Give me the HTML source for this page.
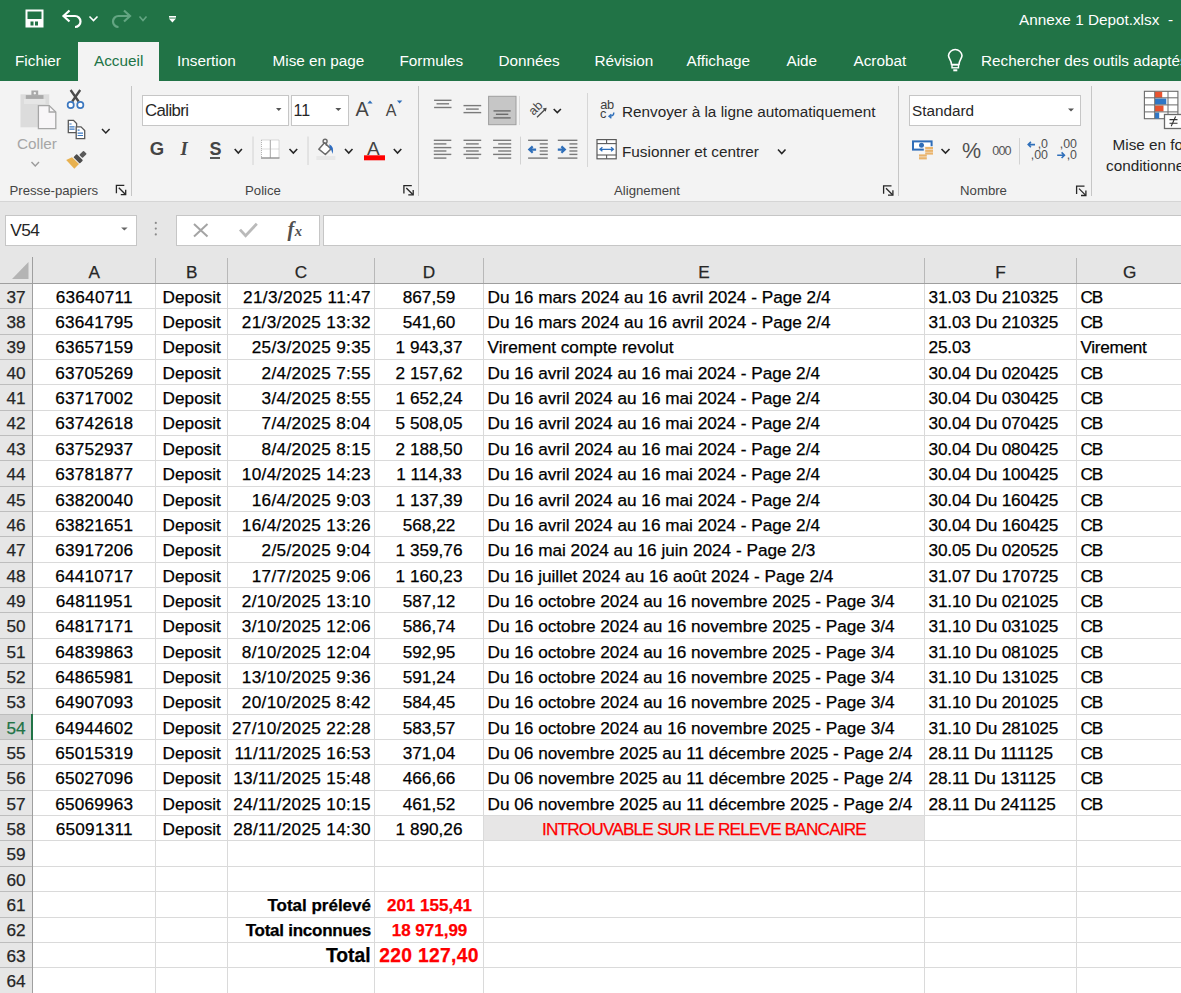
<!DOCTYPE html>
<html><head><meta charset="utf-8"><style>
html,body{margin:0;padding:0;width:1181px;height:993px;overflow:hidden;background:#fff;position:relative}
.t{position:absolute;white-space:pre;font-family:"Liberation Sans",sans-serif}
.r{position:absolute}
svg{position:absolute}
</style></head><body>
<div class="r" style="left:0px;top:0px;width:1181px;height:81px;background:#217346;"></div>
<div class="r" style="left:78px;top:42px;width:81px;height:39px;background:#f3f3f3;"></div>
<div class="t" style="left:1019px;top:11.55px;font-size:15.3px;line-height:15.3px;color:#fff;font-weight:normal;font-family:'Liberation Sans', sans-serif;">Annexe 1 Depot.xlsx</div>
<div class="t" style="left:1168px;top:11.55px;font-size:15.3px;line-height:15.3px;color:#fff;font-weight:normal;font-family:'Liberation Sans', sans-serif;">-</div>
<div class="t" style="left:15px;top:52.55px;font-size:15.3px;line-height:15.3px;color:#fff;font-weight:normal;font-family:'Liberation Sans', sans-serif;">Fichier</div>
<div class="t" style="left:94px;top:52.55px;font-size:15.3px;line-height:15.3px;color:#217346;font-weight:normal;font-family:'Liberation Sans', sans-serif;">Accueil</div>
<div class="t" style="left:177px;top:52.55px;font-size:15.3px;line-height:15.3px;color:#fff;font-weight:normal;font-family:'Liberation Sans', sans-serif;">Insertion</div>
<div class="t" style="left:272.5px;top:52.55px;font-size:15.3px;line-height:15.3px;color:#fff;font-weight:normal;font-family:'Liberation Sans', sans-serif;">Mise en page</div>
<div class="t" style="left:399.5px;top:52.55px;font-size:15.3px;line-height:15.3px;color:#fff;font-weight:normal;font-family:'Liberation Sans', sans-serif;">Formules</div>
<div class="t" style="left:498.5px;top:52.55px;font-size:15.3px;line-height:15.3px;color:#fff;font-weight:normal;font-family:'Liberation Sans', sans-serif;">Données</div>
<div class="t" style="left:594.5px;top:52.55px;font-size:15.3px;line-height:15.3px;color:#fff;font-weight:normal;font-family:'Liberation Sans', sans-serif;">Révision</div>
<div class="t" style="left:686.5px;top:52.55px;font-size:15.3px;line-height:15.3px;color:#fff;font-weight:normal;font-family:'Liberation Sans', sans-serif;">Affichage</div>
<div class="t" style="left:786.5px;top:52.55px;font-size:15.3px;line-height:15.3px;color:#fff;font-weight:normal;font-family:'Liberation Sans', sans-serif;">Aide</div>
<div class="t" style="left:853.5px;top:52.55px;font-size:15.3px;line-height:15.3px;color:#fff;font-weight:normal;font-family:'Liberation Sans', sans-serif;">Acrobat</div>
<div class="t" style="left:981px;top:52.55px;font-size:15.3px;line-height:15.3px;color:#fff;font-weight:normal;font-family:'Liberation Sans', sans-serif;">Rechercher des outils adaptés</div>
<div class="r" style="left:0px;top:81px;width:1181px;height:120px;background:#f3f3f3;"></div>
<div class="r" style="left:0px;top:201px;width:1181px;height:1px;background:#d5d5d5;"></div>
<div class="r" style="left:131px;top:86px;width:1px;height:110px;background:#c6c6c6;"></div>
<div class="r" style="left:418px;top:86px;width:1px;height:110px;background:#c6c6c6;"></div>
<div class="r" style="left:898px;top:86px;width:1px;height:110px;background:#c6c6c6;"></div>
<div class="r" style="left:1091px;top:86px;width:1px;height:110px;background:#c6c6c6;"></div>
<div class="t" style="left:9.5px;top:184.33px;font-size:13.2px;line-height:13.2px;color:#444;font-weight:normal;font-family:'Liberation Sans', sans-serif;">Presse-papiers</div>
<div class="t" style="left:-137px;width:800px;text-align:center;top:184.33px;font-size:13.2px;line-height:13.2px;color:#444;font-weight:normal;font-family:'Liberation Sans', sans-serif;">Police</div>
<div class="t" style="left:247px;width:800px;text-align:center;top:184.33px;font-size:13.2px;line-height:13.2px;color:#444;font-weight:normal;font-family:'Liberation Sans', sans-serif;">Alignement</div>
<div class="t" style="left:583.5px;width:800px;text-align:center;top:184.33px;font-size:13.2px;line-height:13.2px;color:#444;font-weight:normal;font-family:'Liberation Sans', sans-serif;">Nombre</div>
<div class="t" style="left:17px;top:136.05px;font-size:15.3px;line-height:15.3px;color:#a6a6a6;font-weight:normal;font-family:'Liberation Sans', sans-serif;">Coller</div>
<div class="r" style="left:142px;top:95px;width:147px;height:31px;background:#fff;box-sizing:border-box;border:1px solid #c6c6c6"></div>
<div class="r" style="left:291px;top:95px;width:58px;height:31px;background:#fff;box-sizing:border-box;border:1px solid #c6c6c6"></div>
<div class="t" style="left:145px;top:102.58px;font-size:16.8px;line-height:16.8px;color:#262626;font-weight:normal;font-family:'Liberation Sans', sans-serif;letter-spacing:-0.6px">Calibri</div>
<div class="t" style="left:293.5px;top:103.06px;font-size:16px;line-height:16px;color:#262626;font-weight:normal;font-family:'Liberation Sans', sans-serif;">11</div>
<div class="r" style="left:909px;top:95px;width:172px;height:31px;background:#fff;box-sizing:border-box;border:1px solid #c6c6c6"></div>
<div class="t" style="left:912px;top:103.35px;font-size:15.3px;line-height:15.3px;color:#262626;font-weight:normal;font-family:'Liberation Sans', sans-serif;">Standard</div>
<div class="t" style="left:622px;top:104.15px;font-size:15.3px;line-height:15.3px;color:#262626;font-weight:normal;font-family:'Liberation Sans', sans-serif;">Renvoyer à la ligne automatiquement</div>
<div class="t" style="left:622px;top:144.25px;font-size:15.3px;line-height:15.3px;color:#262626;font-weight:normal;font-family:'Liberation Sans', sans-serif;">Fusionner et centrer</div>
<div class="t" style="left:1112.5px;top:137.25px;font-size:15.3px;line-height:15.3px;color:#262626;font-weight:normal;font-family:'Liberation Sans', sans-serif;">Mise en forme</div>
<div class="t" style="left:1106px;top:157.85px;font-size:15.3px;line-height:15.3px;color:#262626;font-weight:normal;font-family:'Liberation Sans', sans-serif;">conditionnelle</div>
<div class="r" style="left:0px;top:202px;width:1181px;height:81px;background:#e6e6e6;"></div>
<div class="r" style="left:5px;top:215px;width:132px;height:31px;background:#fff;box-sizing:border-box;border:1px solid #c6c6c6"></div>
<div class="t" style="left:10.3px;top:221.56px;font-size:17.3px;line-height:17.3px;color:#262626;font-weight:normal;font-family:'Liberation Sans', sans-serif;letter-spacing:-0.6px">V54</div>
<div class="r" style="left:176px;top:215px;width:144px;height:31px;background:#fff;box-sizing:border-box;border:1px solid #c6c6c6"></div>
<div class="r" style="left:323px;top:215px;width:900px;height:31px;background:#fff;box-sizing:border-box;border:1px solid #c6c6c6"></div>
<div class="r" style="left:33px;top:283px;width:1148px;height:710px;background:#fff;"></div>
<div class="r" style="left:33px;top:308px;width:1148px;height:1px;background:#dadada;"></div>
<div class="r" style="left:33px;top:334px;width:1148px;height:1px;background:#dadada;"></div>
<div class="r" style="left:33px;top:359px;width:1148px;height:1px;background:#dadada;"></div>
<div class="r" style="left:33px;top:384px;width:1148px;height:1px;background:#dadada;"></div>
<div class="r" style="left:33px;top:410px;width:1148px;height:1px;background:#dadada;"></div>
<div class="r" style="left:33px;top:435px;width:1148px;height:1px;background:#dadada;"></div>
<div class="r" style="left:33px;top:460px;width:1148px;height:1px;background:#dadada;"></div>
<div class="r" style="left:33px;top:486px;width:1148px;height:1px;background:#dadada;"></div>
<div class="r" style="left:33px;top:511px;width:1148px;height:1px;background:#dadada;"></div>
<div class="r" style="left:33px;top:536px;width:1148px;height:1px;background:#dadada;"></div>
<div class="r" style="left:33px;top:562px;width:1148px;height:1px;background:#dadada;"></div>
<div class="r" style="left:33px;top:587px;width:1148px;height:1px;background:#dadada;"></div>
<div class="r" style="left:33px;top:612px;width:1148px;height:1px;background:#dadada;"></div>
<div class="r" style="left:33px;top:638px;width:1148px;height:1px;background:#dadada;"></div>
<div class="r" style="left:33px;top:663px;width:1148px;height:1px;background:#dadada;"></div>
<div class="r" style="left:33px;top:688px;width:1148px;height:1px;background:#dadada;"></div>
<div class="r" style="left:33px;top:714px;width:1148px;height:1px;background:#dadada;"></div>
<div class="r" style="left:33px;top:739px;width:1148px;height:1px;background:#dadada;"></div>
<div class="r" style="left:33px;top:764px;width:1148px;height:1px;background:#dadada;"></div>
<div class="r" style="left:33px;top:790px;width:1148px;height:1px;background:#dadada;"></div>
<div class="r" style="left:33px;top:815px;width:1148px;height:1px;background:#dadada;"></div>
<div class="r" style="left:33px;top:840px;width:1148px;height:1px;background:#dadada;"></div>
<div class="r" style="left:33px;top:866px;width:1148px;height:1px;background:#dadada;"></div>
<div class="r" style="left:33px;top:891px;width:1148px;height:1px;background:#dadada;"></div>
<div class="r" style="left:33px;top:917px;width:1148px;height:1px;background:#dadada;"></div>
<div class="r" style="left:33px;top:942px;width:1148px;height:1px;background:#dadada;"></div>
<div class="r" style="left:33px;top:967px;width:1148px;height:1px;background:#dadada;"></div>
<div class="r" style="left:33px;top:993px;width:1148px;height:1px;background:#dadada;"></div>
<div class="r" style="left:155px;top:258px;width:1px;height:25px;background:#b8b8b8;"></div>
<div class="r" style="left:155px;top:283px;width:1px;height:710px;background:#dadada;"></div>
<div class="r" style="left:227px;top:258px;width:1px;height:25px;background:#b8b8b8;"></div>
<div class="r" style="left:227px;top:283px;width:1px;height:710px;background:#dadada;"></div>
<div class="r" style="left:374px;top:258px;width:1px;height:25px;background:#b8b8b8;"></div>
<div class="r" style="left:374px;top:283px;width:1px;height:710px;background:#dadada;"></div>
<div class="r" style="left:483px;top:258px;width:1px;height:25px;background:#b8b8b8;"></div>
<div class="r" style="left:483px;top:283px;width:1px;height:710px;background:#dadada;"></div>
<div class="r" style="left:924px;top:258px;width:1px;height:25px;background:#b8b8b8;"></div>
<div class="r" style="left:924px;top:283px;width:1px;height:710px;background:#dadada;"></div>
<div class="r" style="left:1076px;top:258px;width:1px;height:25px;background:#b8b8b8;"></div>
<div class="r" style="left:1076px;top:283px;width:1px;height:710px;background:#dadada;"></div>
<div class="r" style="left:0px;top:283px;width:32px;height:710px;background:#e6e6e6;"></div>
<div class="r" style="left:0px;top:308px;width:32px;height:1px;background:#bdbdbd;"></div>
<div class="r" style="left:0px;top:334px;width:32px;height:1px;background:#bdbdbd;"></div>
<div class="r" style="left:0px;top:359px;width:32px;height:1px;background:#bdbdbd;"></div>
<div class="r" style="left:0px;top:384px;width:32px;height:1px;background:#bdbdbd;"></div>
<div class="r" style="left:0px;top:410px;width:32px;height:1px;background:#bdbdbd;"></div>
<div class="r" style="left:0px;top:435px;width:32px;height:1px;background:#bdbdbd;"></div>
<div class="r" style="left:0px;top:460px;width:32px;height:1px;background:#bdbdbd;"></div>
<div class="r" style="left:0px;top:486px;width:32px;height:1px;background:#bdbdbd;"></div>
<div class="r" style="left:0px;top:511px;width:32px;height:1px;background:#bdbdbd;"></div>
<div class="r" style="left:0px;top:536px;width:32px;height:1px;background:#bdbdbd;"></div>
<div class="r" style="left:0px;top:562px;width:32px;height:1px;background:#bdbdbd;"></div>
<div class="r" style="left:0px;top:587px;width:32px;height:1px;background:#bdbdbd;"></div>
<div class="r" style="left:0px;top:612px;width:32px;height:1px;background:#bdbdbd;"></div>
<div class="r" style="left:0px;top:638px;width:32px;height:1px;background:#bdbdbd;"></div>
<div class="r" style="left:0px;top:663px;width:32px;height:1px;background:#bdbdbd;"></div>
<div class="r" style="left:0px;top:688px;width:32px;height:1px;background:#bdbdbd;"></div>
<div class="r" style="left:0px;top:714px;width:32px;height:1px;background:#bdbdbd;"></div>
<div class="r" style="left:0px;top:739px;width:32px;height:1px;background:#bdbdbd;"></div>
<div class="r" style="left:0px;top:764px;width:32px;height:1px;background:#bdbdbd;"></div>
<div class="r" style="left:0px;top:790px;width:32px;height:1px;background:#bdbdbd;"></div>
<div class="r" style="left:0px;top:815px;width:32px;height:1px;background:#bdbdbd;"></div>
<div class="r" style="left:0px;top:840px;width:32px;height:1px;background:#bdbdbd;"></div>
<div class="r" style="left:0px;top:866px;width:32px;height:1px;background:#bdbdbd;"></div>
<div class="r" style="left:0px;top:891px;width:32px;height:1px;background:#bdbdbd;"></div>
<div class="r" style="left:0px;top:917px;width:32px;height:1px;background:#bdbdbd;"></div>
<div class="r" style="left:0px;top:942px;width:32px;height:1px;background:#bdbdbd;"></div>
<div class="r" style="left:0px;top:967px;width:32px;height:1px;background:#bdbdbd;"></div>
<div class="r" style="left:0px;top:993px;width:32px;height:1px;background:#bdbdbd;"></div>
<div class="r" style="left:32px;top:257px;width:1px;height:736px;background:#9f9f9f;"></div>
<div class="r" style="left:0px;top:283px;width:1181px;height:1px;background:#9f9f9f;"></div>
<div class="t" style="left:-305.75px;width:800px;text-align:center;top:264.14px;font-size:17.2px;line-height:17.2px;color:#262626;font-weight:normal;font-family:'Liberation Sans', sans-serif;-webkit-text-stroke:0.25px currentColor;">A</div>
<div class="t" style="left:-208.25px;width:800px;text-align:center;top:264.14px;font-size:17.2px;line-height:17.2px;color:#262626;font-weight:normal;font-family:'Liberation Sans', sans-serif;-webkit-text-stroke:0.25px currentColor;">B</div>
<div class="t" style="left:-99.0px;width:800px;text-align:center;top:264.14px;font-size:17.2px;line-height:17.2px;color:#262626;font-weight:normal;font-family:'Liberation Sans', sans-serif;-webkit-text-stroke:0.25px currentColor;">C</div>
<div class="t" style="left:29.0px;width:800px;text-align:center;top:264.14px;font-size:17.2px;line-height:17.2px;color:#262626;font-weight:normal;font-family:'Liberation Sans', sans-serif;-webkit-text-stroke:0.25px currentColor;">D</div>
<div class="t" style="left:304.0px;width:800px;text-align:center;top:264.14px;font-size:17.2px;line-height:17.2px;color:#262626;font-weight:normal;font-family:'Liberation Sans', sans-serif;-webkit-text-stroke:0.25px currentColor;">E</div>
<div class="t" style="left:600.5px;width:800px;text-align:center;top:264.14px;font-size:17.2px;line-height:17.2px;color:#262626;font-weight:normal;font-family:'Liberation Sans', sans-serif;-webkit-text-stroke:0.25px currentColor;">F</div>
<div class="t" style="left:729.7px;width:800px;text-align:center;top:264.14px;font-size:17.2px;line-height:17.2px;color:#262626;font-weight:normal;font-family:'Liberation Sans', sans-serif;-webkit-text-stroke:0.25px currentColor;">G</div>
<div class="r" style="left:0px;top:715px;width:32px;height:24px;background:#d2d2d2;"></div>
<div class="r" style="left:31px;top:714px;width:2px;height:26px;background:#217346;"></div>
<div class="r" style="left:484px;top:816px;width:440px;height:24px;background:#e7e6e6;"></div>
<div class="t" style="left:-384px;width:800px;text-align:center;top:288.74px;font-size:17.2px;line-height:17.2px;color:#262626;font-weight:normal;font-family:'Liberation Sans', sans-serif;-webkit-text-stroke:0.25px currentColor;">37</div>
<div class="t" style="left:-305.75px;width:800px;text-align:center;top:288.74px;font-size:17.2px;line-height:17.2px;color:#000;font-weight:normal;font-family:'Liberation Sans', sans-serif;-webkit-text-stroke:0.25px currentColor;letter-spacing:0.2px">63640711</div>
<div class="t" style="left:-208.25px;width:800px;text-align:center;top:288.74px;font-size:17.2px;line-height:17.2px;color:#000;font-weight:normal;font-family:'Liberation Sans', sans-serif;-webkit-text-stroke:0.25px currentColor;">Deposit</div>
<div class="t" style="right:810px;top:288.74px;font-size:17.2px;line-height:17.2px;color:#000;font-weight:normal;font-family:'Liberation Sans', sans-serif;-webkit-text-stroke:0.25px currentColor;letter-spacing:0.33px">21/3/2025 11:47</div>
<div class="t" style="left:29.0px;width:800px;text-align:center;top:288.74px;font-size:17.2px;line-height:17.2px;color:#000;font-weight:normal;font-family:'Liberation Sans', sans-serif;-webkit-text-stroke:0.25px currentColor;">867,59</div>
<div class="t" style="left:487.5px;top:288.74px;font-size:17.2px;line-height:17.2px;color:#000;font-weight:normal;font-family:'Liberation Sans', sans-serif;-webkit-text-stroke:0.25px currentColor;">Du 16 mars 2024 au 16 avril 2024 - Page 2/4</div>
<div class="t" style="left:928.5px;top:288.74px;font-size:17.2px;line-height:17.2px;color:#000;font-weight:normal;font-family:'Liberation Sans', sans-serif;-webkit-text-stroke:0.25px currentColor;letter-spacing:-0.15px">31.03 Du 210325</div>
<div class="t" style="left:1080.5px;top:288.74px;font-size:17.2px;line-height:17.2px;color:#000;font-weight:normal;font-family:'Liberation Sans', sans-serif;-webkit-text-stroke:0.25px currentColor;letter-spacing:-1.2px">CB</div>
<div class="t" style="left:-384px;width:800px;text-align:center;top:314.09px;font-size:17.2px;line-height:17.2px;color:#262626;font-weight:normal;font-family:'Liberation Sans', sans-serif;-webkit-text-stroke:0.25px currentColor;">38</div>
<div class="t" style="left:-305.75px;width:800px;text-align:center;top:314.09px;font-size:17.2px;line-height:17.2px;color:#000;font-weight:normal;font-family:'Liberation Sans', sans-serif;-webkit-text-stroke:0.25px currentColor;letter-spacing:0.2px">63641795</div>
<div class="t" style="left:-208.25px;width:800px;text-align:center;top:314.09px;font-size:17.2px;line-height:17.2px;color:#000;font-weight:normal;font-family:'Liberation Sans', sans-serif;-webkit-text-stroke:0.25px currentColor;">Deposit</div>
<div class="t" style="right:810px;top:314.09px;font-size:17.2px;line-height:17.2px;color:#000;font-weight:normal;font-family:'Liberation Sans', sans-serif;-webkit-text-stroke:0.25px currentColor;letter-spacing:0.33px">21/3/2025 13:32</div>
<div class="t" style="left:29.0px;width:800px;text-align:center;top:314.09px;font-size:17.2px;line-height:17.2px;color:#000;font-weight:normal;font-family:'Liberation Sans', sans-serif;-webkit-text-stroke:0.25px currentColor;">541,60</div>
<div class="t" style="left:487.5px;top:314.09px;font-size:17.2px;line-height:17.2px;color:#000;font-weight:normal;font-family:'Liberation Sans', sans-serif;-webkit-text-stroke:0.25px currentColor;">Du 16 mars 2024 au 16 avril 2024 - Page 2/4</div>
<div class="t" style="left:928.5px;top:314.09px;font-size:17.2px;line-height:17.2px;color:#000;font-weight:normal;font-family:'Liberation Sans', sans-serif;-webkit-text-stroke:0.25px currentColor;letter-spacing:-0.15px">31.03 Du 210325</div>
<div class="t" style="left:1080.5px;top:314.09px;font-size:17.2px;line-height:17.2px;color:#000;font-weight:normal;font-family:'Liberation Sans', sans-serif;-webkit-text-stroke:0.25px currentColor;letter-spacing:-1.2px">CB</div>
<div class="t" style="left:-384px;width:800px;text-align:center;top:339.44px;font-size:17.2px;line-height:17.2px;color:#262626;font-weight:normal;font-family:'Liberation Sans', sans-serif;-webkit-text-stroke:0.25px currentColor;">39</div>
<div class="t" style="left:-305.75px;width:800px;text-align:center;top:339.44px;font-size:17.2px;line-height:17.2px;color:#000;font-weight:normal;font-family:'Liberation Sans', sans-serif;-webkit-text-stroke:0.25px currentColor;letter-spacing:0.2px">63657159</div>
<div class="t" style="left:-208.25px;width:800px;text-align:center;top:339.44px;font-size:17.2px;line-height:17.2px;color:#000;font-weight:normal;font-family:'Liberation Sans', sans-serif;-webkit-text-stroke:0.25px currentColor;">Deposit</div>
<div class="t" style="right:810px;top:339.44px;font-size:17.2px;line-height:17.2px;color:#000;font-weight:normal;font-family:'Liberation Sans', sans-serif;-webkit-text-stroke:0.25px currentColor;letter-spacing:0.33px">25/3/2025 9:35</div>
<div class="t" style="left:29.0px;width:800px;text-align:center;top:339.44px;font-size:17.2px;line-height:17.2px;color:#000;font-weight:normal;font-family:'Liberation Sans', sans-serif;-webkit-text-stroke:0.25px currentColor;">1 943,37</div>
<div class="t" style="left:487.5px;top:339.44px;font-size:17.2px;line-height:17.2px;color:#000;font-weight:normal;font-family:'Liberation Sans', sans-serif;-webkit-text-stroke:0.25px currentColor;">Virement compte revolut</div>
<div class="t" style="left:928.5px;top:339.44px;font-size:17.2px;line-height:17.2px;color:#000;font-weight:normal;font-family:'Liberation Sans', sans-serif;-webkit-text-stroke:0.25px currentColor;letter-spacing:-0.15px">25.03</div>
<div class="t" style="left:1080.5px;top:339.44px;font-size:17.2px;line-height:17.2px;color:#000;font-weight:normal;font-family:'Liberation Sans', sans-serif;-webkit-text-stroke:0.25px currentColor;letter-spacing:-0.3px">Virement</div>
<div class="t" style="left:-384px;width:800px;text-align:center;top:364.79px;font-size:17.2px;line-height:17.2px;color:#262626;font-weight:normal;font-family:'Liberation Sans', sans-serif;-webkit-text-stroke:0.25px currentColor;">40</div>
<div class="t" style="left:-305.75px;width:800px;text-align:center;top:364.79px;font-size:17.2px;line-height:17.2px;color:#000;font-weight:normal;font-family:'Liberation Sans', sans-serif;-webkit-text-stroke:0.25px currentColor;letter-spacing:0.2px">63705269</div>
<div class="t" style="left:-208.25px;width:800px;text-align:center;top:364.79px;font-size:17.2px;line-height:17.2px;color:#000;font-weight:normal;font-family:'Liberation Sans', sans-serif;-webkit-text-stroke:0.25px currentColor;">Deposit</div>
<div class="t" style="right:810px;top:364.79px;font-size:17.2px;line-height:17.2px;color:#000;font-weight:normal;font-family:'Liberation Sans', sans-serif;-webkit-text-stroke:0.25px currentColor;letter-spacing:0.33px">2/4/2025 7:55</div>
<div class="t" style="left:29.0px;width:800px;text-align:center;top:364.79px;font-size:17.2px;line-height:17.2px;color:#000;font-weight:normal;font-family:'Liberation Sans', sans-serif;-webkit-text-stroke:0.25px currentColor;">2 157,62</div>
<div class="t" style="left:487.5px;top:364.79px;font-size:17.2px;line-height:17.2px;color:#000;font-weight:normal;font-family:'Liberation Sans', sans-serif;-webkit-text-stroke:0.25px currentColor;">Du 16 avril 2024 au 16 mai 2024 - Page 2/4</div>
<div class="t" style="left:928.5px;top:364.79px;font-size:17.2px;line-height:17.2px;color:#000;font-weight:normal;font-family:'Liberation Sans', sans-serif;-webkit-text-stroke:0.25px currentColor;letter-spacing:-0.15px">30.04 Du 020425</div>
<div class="t" style="left:1080.5px;top:364.79px;font-size:17.2px;line-height:17.2px;color:#000;font-weight:normal;font-family:'Liberation Sans', sans-serif;-webkit-text-stroke:0.25px currentColor;letter-spacing:-1.2px">CB</div>
<div class="t" style="left:-384px;width:800px;text-align:center;top:390.14px;font-size:17.2px;line-height:17.2px;color:#262626;font-weight:normal;font-family:'Liberation Sans', sans-serif;-webkit-text-stroke:0.25px currentColor;">41</div>
<div class="t" style="left:-305.75px;width:800px;text-align:center;top:390.14px;font-size:17.2px;line-height:17.2px;color:#000;font-weight:normal;font-family:'Liberation Sans', sans-serif;-webkit-text-stroke:0.25px currentColor;letter-spacing:0.2px">63717002</div>
<div class="t" style="left:-208.25px;width:800px;text-align:center;top:390.14px;font-size:17.2px;line-height:17.2px;color:#000;font-weight:normal;font-family:'Liberation Sans', sans-serif;-webkit-text-stroke:0.25px currentColor;">Deposit</div>
<div class="t" style="right:810px;top:390.14px;font-size:17.2px;line-height:17.2px;color:#000;font-weight:normal;font-family:'Liberation Sans', sans-serif;-webkit-text-stroke:0.25px currentColor;letter-spacing:0.33px">3/4/2025 8:55</div>
<div class="t" style="left:29.0px;width:800px;text-align:center;top:390.14px;font-size:17.2px;line-height:17.2px;color:#000;font-weight:normal;font-family:'Liberation Sans', sans-serif;-webkit-text-stroke:0.25px currentColor;">1 652,24</div>
<div class="t" style="left:487.5px;top:390.14px;font-size:17.2px;line-height:17.2px;color:#000;font-weight:normal;font-family:'Liberation Sans', sans-serif;-webkit-text-stroke:0.25px currentColor;">Du 16 avril 2024 au 16 mai 2024 - Page 2/4</div>
<div class="t" style="left:928.5px;top:390.14px;font-size:17.2px;line-height:17.2px;color:#000;font-weight:normal;font-family:'Liberation Sans', sans-serif;-webkit-text-stroke:0.25px currentColor;letter-spacing:-0.15px">30.04 Du 030425</div>
<div class="t" style="left:1080.5px;top:390.14px;font-size:17.2px;line-height:17.2px;color:#000;font-weight:normal;font-family:'Liberation Sans', sans-serif;-webkit-text-stroke:0.25px currentColor;letter-spacing:-1.2px">CB</div>
<div class="t" style="left:-384px;width:800px;text-align:center;top:415.49px;font-size:17.2px;line-height:17.2px;color:#262626;font-weight:normal;font-family:'Liberation Sans', sans-serif;-webkit-text-stroke:0.25px currentColor;">42</div>
<div class="t" style="left:-305.75px;width:800px;text-align:center;top:415.49px;font-size:17.2px;line-height:17.2px;color:#000;font-weight:normal;font-family:'Liberation Sans', sans-serif;-webkit-text-stroke:0.25px currentColor;letter-spacing:0.2px">63742618</div>
<div class="t" style="left:-208.25px;width:800px;text-align:center;top:415.49px;font-size:17.2px;line-height:17.2px;color:#000;font-weight:normal;font-family:'Liberation Sans', sans-serif;-webkit-text-stroke:0.25px currentColor;">Deposit</div>
<div class="t" style="right:810px;top:415.49px;font-size:17.2px;line-height:17.2px;color:#000;font-weight:normal;font-family:'Liberation Sans', sans-serif;-webkit-text-stroke:0.25px currentColor;letter-spacing:0.33px">7/4/2025 8:04</div>
<div class="t" style="left:29.0px;width:800px;text-align:center;top:415.49px;font-size:17.2px;line-height:17.2px;color:#000;font-weight:normal;font-family:'Liberation Sans', sans-serif;-webkit-text-stroke:0.25px currentColor;">5 508,05</div>
<div class="t" style="left:487.5px;top:415.49px;font-size:17.2px;line-height:17.2px;color:#000;font-weight:normal;font-family:'Liberation Sans', sans-serif;-webkit-text-stroke:0.25px currentColor;">Du 16 avril 2024 au 16 mai 2024 - Page 2/4</div>
<div class="t" style="left:928.5px;top:415.49px;font-size:17.2px;line-height:17.2px;color:#000;font-weight:normal;font-family:'Liberation Sans', sans-serif;-webkit-text-stroke:0.25px currentColor;letter-spacing:-0.15px">30.04 Du 070425</div>
<div class="t" style="left:1080.5px;top:415.49px;font-size:17.2px;line-height:17.2px;color:#000;font-weight:normal;font-family:'Liberation Sans', sans-serif;-webkit-text-stroke:0.25px currentColor;letter-spacing:-1.2px">CB</div>
<div class="t" style="left:-384px;width:800px;text-align:center;top:440.84px;font-size:17.2px;line-height:17.2px;color:#262626;font-weight:normal;font-family:'Liberation Sans', sans-serif;-webkit-text-stroke:0.25px currentColor;">43</div>
<div class="t" style="left:-305.75px;width:800px;text-align:center;top:440.84px;font-size:17.2px;line-height:17.2px;color:#000;font-weight:normal;font-family:'Liberation Sans', sans-serif;-webkit-text-stroke:0.25px currentColor;letter-spacing:0.2px">63752937</div>
<div class="t" style="left:-208.25px;width:800px;text-align:center;top:440.84px;font-size:17.2px;line-height:17.2px;color:#000;font-weight:normal;font-family:'Liberation Sans', sans-serif;-webkit-text-stroke:0.25px currentColor;">Deposit</div>
<div class="t" style="right:810px;top:440.84px;font-size:17.2px;line-height:17.2px;color:#000;font-weight:normal;font-family:'Liberation Sans', sans-serif;-webkit-text-stroke:0.25px currentColor;letter-spacing:0.33px">8/4/2025 8:15</div>
<div class="t" style="left:29.0px;width:800px;text-align:center;top:440.84px;font-size:17.2px;line-height:17.2px;color:#000;font-weight:normal;font-family:'Liberation Sans', sans-serif;-webkit-text-stroke:0.25px currentColor;">2 188,50</div>
<div class="t" style="left:487.5px;top:440.84px;font-size:17.2px;line-height:17.2px;color:#000;font-weight:normal;font-family:'Liberation Sans', sans-serif;-webkit-text-stroke:0.25px currentColor;">Du 16 avril 2024 au 16 mai 2024 - Page 2/4</div>
<div class="t" style="left:928.5px;top:440.84px;font-size:17.2px;line-height:17.2px;color:#000;font-weight:normal;font-family:'Liberation Sans', sans-serif;-webkit-text-stroke:0.25px currentColor;letter-spacing:-0.15px">30.04 Du 080425</div>
<div class="t" style="left:1080.5px;top:440.84px;font-size:17.2px;line-height:17.2px;color:#000;font-weight:normal;font-family:'Liberation Sans', sans-serif;-webkit-text-stroke:0.25px currentColor;letter-spacing:-1.2px">CB</div>
<div class="t" style="left:-384px;width:800px;text-align:center;top:466.19px;font-size:17.2px;line-height:17.2px;color:#262626;font-weight:normal;font-family:'Liberation Sans', sans-serif;-webkit-text-stroke:0.25px currentColor;">44</div>
<div class="t" style="left:-305.75px;width:800px;text-align:center;top:466.19px;font-size:17.2px;line-height:17.2px;color:#000;font-weight:normal;font-family:'Liberation Sans', sans-serif;-webkit-text-stroke:0.25px currentColor;letter-spacing:0.2px">63781877</div>
<div class="t" style="left:-208.25px;width:800px;text-align:center;top:466.19px;font-size:17.2px;line-height:17.2px;color:#000;font-weight:normal;font-family:'Liberation Sans', sans-serif;-webkit-text-stroke:0.25px currentColor;">Deposit</div>
<div class="t" style="right:810px;top:466.19px;font-size:17.2px;line-height:17.2px;color:#000;font-weight:normal;font-family:'Liberation Sans', sans-serif;-webkit-text-stroke:0.25px currentColor;letter-spacing:0.33px">10/4/2025 14:23</div>
<div class="t" style="left:29.0px;width:800px;text-align:center;top:466.19px;font-size:17.2px;line-height:17.2px;color:#000;font-weight:normal;font-family:'Liberation Sans', sans-serif;-webkit-text-stroke:0.25px currentColor;">1 114,33</div>
<div class="t" style="left:487.5px;top:466.19px;font-size:17.2px;line-height:17.2px;color:#000;font-weight:normal;font-family:'Liberation Sans', sans-serif;-webkit-text-stroke:0.25px currentColor;">Du 16 avril 2024 au 16 mai 2024 - Page 2/4</div>
<div class="t" style="left:928.5px;top:466.19px;font-size:17.2px;line-height:17.2px;color:#000;font-weight:normal;font-family:'Liberation Sans', sans-serif;-webkit-text-stroke:0.25px currentColor;letter-spacing:-0.15px">30.04 Du 100425</div>
<div class="t" style="left:1080.5px;top:466.19px;font-size:17.2px;line-height:17.2px;color:#000;font-weight:normal;font-family:'Liberation Sans', sans-serif;-webkit-text-stroke:0.25px currentColor;letter-spacing:-1.2px">CB</div>
<div class="t" style="left:-384px;width:800px;text-align:center;top:491.54px;font-size:17.2px;line-height:17.2px;color:#262626;font-weight:normal;font-family:'Liberation Sans', sans-serif;-webkit-text-stroke:0.25px currentColor;">45</div>
<div class="t" style="left:-305.75px;width:800px;text-align:center;top:491.54px;font-size:17.2px;line-height:17.2px;color:#000;font-weight:normal;font-family:'Liberation Sans', sans-serif;-webkit-text-stroke:0.25px currentColor;letter-spacing:0.2px">63820040</div>
<div class="t" style="left:-208.25px;width:800px;text-align:center;top:491.54px;font-size:17.2px;line-height:17.2px;color:#000;font-weight:normal;font-family:'Liberation Sans', sans-serif;-webkit-text-stroke:0.25px currentColor;">Deposit</div>
<div class="t" style="right:810px;top:491.54px;font-size:17.2px;line-height:17.2px;color:#000;font-weight:normal;font-family:'Liberation Sans', sans-serif;-webkit-text-stroke:0.25px currentColor;letter-spacing:0.33px">16/4/2025 9:03</div>
<div class="t" style="left:29.0px;width:800px;text-align:center;top:491.54px;font-size:17.2px;line-height:17.2px;color:#000;font-weight:normal;font-family:'Liberation Sans', sans-serif;-webkit-text-stroke:0.25px currentColor;">1 137,39</div>
<div class="t" style="left:487.5px;top:491.54px;font-size:17.2px;line-height:17.2px;color:#000;font-weight:normal;font-family:'Liberation Sans', sans-serif;-webkit-text-stroke:0.25px currentColor;">Du 16 avril 2024 au 16 mai 2024 - Page 2/4</div>
<div class="t" style="left:928.5px;top:491.54px;font-size:17.2px;line-height:17.2px;color:#000;font-weight:normal;font-family:'Liberation Sans', sans-serif;-webkit-text-stroke:0.25px currentColor;letter-spacing:-0.15px">30.04 Du 160425</div>
<div class="t" style="left:1080.5px;top:491.54px;font-size:17.2px;line-height:17.2px;color:#000;font-weight:normal;font-family:'Liberation Sans', sans-serif;-webkit-text-stroke:0.25px currentColor;letter-spacing:-1.2px">CB</div>
<div class="t" style="left:-384px;width:800px;text-align:center;top:516.89px;font-size:17.2px;line-height:17.2px;color:#262626;font-weight:normal;font-family:'Liberation Sans', sans-serif;-webkit-text-stroke:0.25px currentColor;">46</div>
<div class="t" style="left:-305.75px;width:800px;text-align:center;top:516.89px;font-size:17.2px;line-height:17.2px;color:#000;font-weight:normal;font-family:'Liberation Sans', sans-serif;-webkit-text-stroke:0.25px currentColor;letter-spacing:0.2px">63821651</div>
<div class="t" style="left:-208.25px;width:800px;text-align:center;top:516.89px;font-size:17.2px;line-height:17.2px;color:#000;font-weight:normal;font-family:'Liberation Sans', sans-serif;-webkit-text-stroke:0.25px currentColor;">Deposit</div>
<div class="t" style="right:810px;top:516.89px;font-size:17.2px;line-height:17.2px;color:#000;font-weight:normal;font-family:'Liberation Sans', sans-serif;-webkit-text-stroke:0.25px currentColor;letter-spacing:0.33px">16/4/2025 13:26</div>
<div class="t" style="left:29.0px;width:800px;text-align:center;top:516.89px;font-size:17.2px;line-height:17.2px;color:#000;font-weight:normal;font-family:'Liberation Sans', sans-serif;-webkit-text-stroke:0.25px currentColor;">568,22</div>
<div class="t" style="left:487.5px;top:516.89px;font-size:17.2px;line-height:17.2px;color:#000;font-weight:normal;font-family:'Liberation Sans', sans-serif;-webkit-text-stroke:0.25px currentColor;">Du 16 avril 2024 au 16 mai 2024 - Page 2/4</div>
<div class="t" style="left:928.5px;top:516.89px;font-size:17.2px;line-height:17.2px;color:#000;font-weight:normal;font-family:'Liberation Sans', sans-serif;-webkit-text-stroke:0.25px currentColor;letter-spacing:-0.15px">30.04 Du 160425</div>
<div class="t" style="left:1080.5px;top:516.89px;font-size:17.2px;line-height:17.2px;color:#000;font-weight:normal;font-family:'Liberation Sans', sans-serif;-webkit-text-stroke:0.25px currentColor;letter-spacing:-1.2px">CB</div>
<div class="t" style="left:-384px;width:800px;text-align:center;top:542.24px;font-size:17.2px;line-height:17.2px;color:#262626;font-weight:normal;font-family:'Liberation Sans', sans-serif;-webkit-text-stroke:0.25px currentColor;">47</div>
<div class="t" style="left:-305.75px;width:800px;text-align:center;top:542.24px;font-size:17.2px;line-height:17.2px;color:#000;font-weight:normal;font-family:'Liberation Sans', sans-serif;-webkit-text-stroke:0.25px currentColor;letter-spacing:0.2px">63917206</div>
<div class="t" style="left:-208.25px;width:800px;text-align:center;top:542.24px;font-size:17.2px;line-height:17.2px;color:#000;font-weight:normal;font-family:'Liberation Sans', sans-serif;-webkit-text-stroke:0.25px currentColor;">Deposit</div>
<div class="t" style="right:810px;top:542.24px;font-size:17.2px;line-height:17.2px;color:#000;font-weight:normal;font-family:'Liberation Sans', sans-serif;-webkit-text-stroke:0.25px currentColor;letter-spacing:0.33px">2/5/2025 9:04</div>
<div class="t" style="left:29.0px;width:800px;text-align:center;top:542.24px;font-size:17.2px;line-height:17.2px;color:#000;font-weight:normal;font-family:'Liberation Sans', sans-serif;-webkit-text-stroke:0.25px currentColor;">1 359,76</div>
<div class="t" style="left:487.5px;top:542.24px;font-size:17.2px;line-height:17.2px;color:#000;font-weight:normal;font-family:'Liberation Sans', sans-serif;-webkit-text-stroke:0.25px currentColor;">Du 16 mai 2024 au 16 juin 2024 - Page 2/3</div>
<div class="t" style="left:928.5px;top:542.24px;font-size:17.2px;line-height:17.2px;color:#000;font-weight:normal;font-family:'Liberation Sans', sans-serif;-webkit-text-stroke:0.25px currentColor;letter-spacing:-0.15px">30.05 Du 020525</div>
<div class="t" style="left:1080.5px;top:542.24px;font-size:17.2px;line-height:17.2px;color:#000;font-weight:normal;font-family:'Liberation Sans', sans-serif;-webkit-text-stroke:0.25px currentColor;letter-spacing:-1.2px">CB</div>
<div class="t" style="left:-384px;width:800px;text-align:center;top:567.59px;font-size:17.2px;line-height:17.2px;color:#262626;font-weight:normal;font-family:'Liberation Sans', sans-serif;-webkit-text-stroke:0.25px currentColor;">48</div>
<div class="t" style="left:-305.75px;width:800px;text-align:center;top:567.59px;font-size:17.2px;line-height:17.2px;color:#000;font-weight:normal;font-family:'Liberation Sans', sans-serif;-webkit-text-stroke:0.25px currentColor;letter-spacing:0.2px">64410717</div>
<div class="t" style="left:-208.25px;width:800px;text-align:center;top:567.59px;font-size:17.2px;line-height:17.2px;color:#000;font-weight:normal;font-family:'Liberation Sans', sans-serif;-webkit-text-stroke:0.25px currentColor;">Deposit</div>
<div class="t" style="right:810px;top:567.59px;font-size:17.2px;line-height:17.2px;color:#000;font-weight:normal;font-family:'Liberation Sans', sans-serif;-webkit-text-stroke:0.25px currentColor;letter-spacing:0.33px">17/7/2025 9:06</div>
<div class="t" style="left:29.0px;width:800px;text-align:center;top:567.59px;font-size:17.2px;line-height:17.2px;color:#000;font-weight:normal;font-family:'Liberation Sans', sans-serif;-webkit-text-stroke:0.25px currentColor;">1 160,23</div>
<div class="t" style="left:487.5px;top:567.59px;font-size:17.2px;line-height:17.2px;color:#000;font-weight:normal;font-family:'Liberation Sans', sans-serif;-webkit-text-stroke:0.25px currentColor;">Du 16 juillet 2024 au 16 août 2024 - Page 2/4</div>
<div class="t" style="left:928.5px;top:567.59px;font-size:17.2px;line-height:17.2px;color:#000;font-weight:normal;font-family:'Liberation Sans', sans-serif;-webkit-text-stroke:0.25px currentColor;letter-spacing:-0.15px">31.07 Du 170725</div>
<div class="t" style="left:1080.5px;top:567.59px;font-size:17.2px;line-height:17.2px;color:#000;font-weight:normal;font-family:'Liberation Sans', sans-serif;-webkit-text-stroke:0.25px currentColor;letter-spacing:-1.2px">CB</div>
<div class="t" style="left:-384px;width:800px;text-align:center;top:592.94px;font-size:17.2px;line-height:17.2px;color:#262626;font-weight:normal;font-family:'Liberation Sans', sans-serif;-webkit-text-stroke:0.25px currentColor;">49</div>
<div class="t" style="left:-305.75px;width:800px;text-align:center;top:592.94px;font-size:17.2px;line-height:17.2px;color:#000;font-weight:normal;font-family:'Liberation Sans', sans-serif;-webkit-text-stroke:0.25px currentColor;letter-spacing:0.2px">64811951</div>
<div class="t" style="left:-208.25px;width:800px;text-align:center;top:592.94px;font-size:17.2px;line-height:17.2px;color:#000;font-weight:normal;font-family:'Liberation Sans', sans-serif;-webkit-text-stroke:0.25px currentColor;">Deposit</div>
<div class="t" style="right:810px;top:592.94px;font-size:17.2px;line-height:17.2px;color:#000;font-weight:normal;font-family:'Liberation Sans', sans-serif;-webkit-text-stroke:0.25px currentColor;letter-spacing:0.33px">2/10/2025 13:10</div>
<div class="t" style="left:29.0px;width:800px;text-align:center;top:592.94px;font-size:17.2px;line-height:17.2px;color:#000;font-weight:normal;font-family:'Liberation Sans', sans-serif;-webkit-text-stroke:0.25px currentColor;">587,12</div>
<div class="t" style="left:487.5px;top:592.94px;font-size:17.2px;line-height:17.2px;color:#000;font-weight:normal;font-family:'Liberation Sans', sans-serif;-webkit-text-stroke:0.25px currentColor;">Du 16 octobre 2024 au 16 novembre 2025 - Page 3/4</div>
<div class="t" style="left:928.5px;top:592.94px;font-size:17.2px;line-height:17.2px;color:#000;font-weight:normal;font-family:'Liberation Sans', sans-serif;-webkit-text-stroke:0.25px currentColor;letter-spacing:-0.15px">31.10 Du 021025</div>
<div class="t" style="left:1080.5px;top:592.94px;font-size:17.2px;line-height:17.2px;color:#000;font-weight:normal;font-family:'Liberation Sans', sans-serif;-webkit-text-stroke:0.25px currentColor;letter-spacing:-1.2px">CB</div>
<div class="t" style="left:-384px;width:800px;text-align:center;top:618.29px;font-size:17.2px;line-height:17.2px;color:#262626;font-weight:normal;font-family:'Liberation Sans', sans-serif;-webkit-text-stroke:0.25px currentColor;">50</div>
<div class="t" style="left:-305.75px;width:800px;text-align:center;top:618.29px;font-size:17.2px;line-height:17.2px;color:#000;font-weight:normal;font-family:'Liberation Sans', sans-serif;-webkit-text-stroke:0.25px currentColor;letter-spacing:0.2px">64817171</div>
<div class="t" style="left:-208.25px;width:800px;text-align:center;top:618.29px;font-size:17.2px;line-height:17.2px;color:#000;font-weight:normal;font-family:'Liberation Sans', sans-serif;-webkit-text-stroke:0.25px currentColor;">Deposit</div>
<div class="t" style="right:810px;top:618.29px;font-size:17.2px;line-height:17.2px;color:#000;font-weight:normal;font-family:'Liberation Sans', sans-serif;-webkit-text-stroke:0.25px currentColor;letter-spacing:0.33px">3/10/2025 12:06</div>
<div class="t" style="left:29.0px;width:800px;text-align:center;top:618.29px;font-size:17.2px;line-height:17.2px;color:#000;font-weight:normal;font-family:'Liberation Sans', sans-serif;-webkit-text-stroke:0.25px currentColor;">586,74</div>
<div class="t" style="left:487.5px;top:618.29px;font-size:17.2px;line-height:17.2px;color:#000;font-weight:normal;font-family:'Liberation Sans', sans-serif;-webkit-text-stroke:0.25px currentColor;">Du 16 octobre 2024 au 16 novembre 2025 - Page 3/4</div>
<div class="t" style="left:928.5px;top:618.29px;font-size:17.2px;line-height:17.2px;color:#000;font-weight:normal;font-family:'Liberation Sans', sans-serif;-webkit-text-stroke:0.25px currentColor;letter-spacing:-0.15px">31.10 Du 031025</div>
<div class="t" style="left:1080.5px;top:618.29px;font-size:17.2px;line-height:17.2px;color:#000;font-weight:normal;font-family:'Liberation Sans', sans-serif;-webkit-text-stroke:0.25px currentColor;letter-spacing:-1.2px">CB</div>
<div class="t" style="left:-384px;width:800px;text-align:center;top:643.64px;font-size:17.2px;line-height:17.2px;color:#262626;font-weight:normal;font-family:'Liberation Sans', sans-serif;-webkit-text-stroke:0.25px currentColor;">51</div>
<div class="t" style="left:-305.75px;width:800px;text-align:center;top:643.64px;font-size:17.2px;line-height:17.2px;color:#000;font-weight:normal;font-family:'Liberation Sans', sans-serif;-webkit-text-stroke:0.25px currentColor;letter-spacing:0.2px">64839863</div>
<div class="t" style="left:-208.25px;width:800px;text-align:center;top:643.64px;font-size:17.2px;line-height:17.2px;color:#000;font-weight:normal;font-family:'Liberation Sans', sans-serif;-webkit-text-stroke:0.25px currentColor;">Deposit</div>
<div class="t" style="right:810px;top:643.64px;font-size:17.2px;line-height:17.2px;color:#000;font-weight:normal;font-family:'Liberation Sans', sans-serif;-webkit-text-stroke:0.25px currentColor;letter-spacing:0.33px">8/10/2025 12:04</div>
<div class="t" style="left:29.0px;width:800px;text-align:center;top:643.64px;font-size:17.2px;line-height:17.2px;color:#000;font-weight:normal;font-family:'Liberation Sans', sans-serif;-webkit-text-stroke:0.25px currentColor;">592,95</div>
<div class="t" style="left:487.5px;top:643.64px;font-size:17.2px;line-height:17.2px;color:#000;font-weight:normal;font-family:'Liberation Sans', sans-serif;-webkit-text-stroke:0.25px currentColor;">Du 16 octobre 2024 au 16 novembre 2025 - Page 3/4</div>
<div class="t" style="left:928.5px;top:643.64px;font-size:17.2px;line-height:17.2px;color:#000;font-weight:normal;font-family:'Liberation Sans', sans-serif;-webkit-text-stroke:0.25px currentColor;letter-spacing:-0.15px">31.10 Du 081025</div>
<div class="t" style="left:1080.5px;top:643.64px;font-size:17.2px;line-height:17.2px;color:#000;font-weight:normal;font-family:'Liberation Sans', sans-serif;-webkit-text-stroke:0.25px currentColor;letter-spacing:-1.2px">CB</div>
<div class="t" style="left:-384px;width:800px;text-align:center;top:668.99px;font-size:17.2px;line-height:17.2px;color:#262626;font-weight:normal;font-family:'Liberation Sans', sans-serif;-webkit-text-stroke:0.25px currentColor;">52</div>
<div class="t" style="left:-305.75px;width:800px;text-align:center;top:668.99px;font-size:17.2px;line-height:17.2px;color:#000;font-weight:normal;font-family:'Liberation Sans', sans-serif;-webkit-text-stroke:0.25px currentColor;letter-spacing:0.2px">64865981</div>
<div class="t" style="left:-208.25px;width:800px;text-align:center;top:668.99px;font-size:17.2px;line-height:17.2px;color:#000;font-weight:normal;font-family:'Liberation Sans', sans-serif;-webkit-text-stroke:0.25px currentColor;">Deposit</div>
<div class="t" style="right:810px;top:668.99px;font-size:17.2px;line-height:17.2px;color:#000;font-weight:normal;font-family:'Liberation Sans', sans-serif;-webkit-text-stroke:0.25px currentColor;letter-spacing:0.33px">13/10/2025 9:36</div>
<div class="t" style="left:29.0px;width:800px;text-align:center;top:668.99px;font-size:17.2px;line-height:17.2px;color:#000;font-weight:normal;font-family:'Liberation Sans', sans-serif;-webkit-text-stroke:0.25px currentColor;">591,24</div>
<div class="t" style="left:487.5px;top:668.99px;font-size:17.2px;line-height:17.2px;color:#000;font-weight:normal;font-family:'Liberation Sans', sans-serif;-webkit-text-stroke:0.25px currentColor;">Du 16 octobre 2024 au 16 novembre 2025 - Page 3/4</div>
<div class="t" style="left:928.5px;top:668.99px;font-size:17.2px;line-height:17.2px;color:#000;font-weight:normal;font-family:'Liberation Sans', sans-serif;-webkit-text-stroke:0.25px currentColor;letter-spacing:-0.15px">31.10 Du 131025</div>
<div class="t" style="left:1080.5px;top:668.99px;font-size:17.2px;line-height:17.2px;color:#000;font-weight:normal;font-family:'Liberation Sans', sans-serif;-webkit-text-stroke:0.25px currentColor;letter-spacing:-1.2px">CB</div>
<div class="t" style="left:-384px;width:800px;text-align:center;top:694.34px;font-size:17.2px;line-height:17.2px;color:#262626;font-weight:normal;font-family:'Liberation Sans', sans-serif;-webkit-text-stroke:0.25px currentColor;">53</div>
<div class="t" style="left:-305.75px;width:800px;text-align:center;top:694.34px;font-size:17.2px;line-height:17.2px;color:#000;font-weight:normal;font-family:'Liberation Sans', sans-serif;-webkit-text-stroke:0.25px currentColor;letter-spacing:0.2px">64907093</div>
<div class="t" style="left:-208.25px;width:800px;text-align:center;top:694.34px;font-size:17.2px;line-height:17.2px;color:#000;font-weight:normal;font-family:'Liberation Sans', sans-serif;-webkit-text-stroke:0.25px currentColor;">Deposit</div>
<div class="t" style="right:810px;top:694.34px;font-size:17.2px;line-height:17.2px;color:#000;font-weight:normal;font-family:'Liberation Sans', sans-serif;-webkit-text-stroke:0.25px currentColor;letter-spacing:0.33px">20/10/2025 8:42</div>
<div class="t" style="left:29.0px;width:800px;text-align:center;top:694.34px;font-size:17.2px;line-height:17.2px;color:#000;font-weight:normal;font-family:'Liberation Sans', sans-serif;-webkit-text-stroke:0.25px currentColor;">584,45</div>
<div class="t" style="left:487.5px;top:694.34px;font-size:17.2px;line-height:17.2px;color:#000;font-weight:normal;font-family:'Liberation Sans', sans-serif;-webkit-text-stroke:0.25px currentColor;">Du 16 octobre 2024 au 16 novembre 2025 - Page 3/4</div>
<div class="t" style="left:928.5px;top:694.34px;font-size:17.2px;line-height:17.2px;color:#000;font-weight:normal;font-family:'Liberation Sans', sans-serif;-webkit-text-stroke:0.25px currentColor;letter-spacing:-0.15px">31.10 Du 201025</div>
<div class="t" style="left:1080.5px;top:694.34px;font-size:17.2px;line-height:17.2px;color:#000;font-weight:normal;font-family:'Liberation Sans', sans-serif;-webkit-text-stroke:0.25px currentColor;letter-spacing:-1.2px">CB</div>
<div class="t" style="left:-384px;width:800px;text-align:center;top:719.69px;font-size:17.2px;line-height:17.2px;color:#217346;font-weight:normal;font-family:'Liberation Sans', sans-serif;-webkit-text-stroke:0.25px currentColor;">54</div>
<div class="t" style="left:-305.75px;width:800px;text-align:center;top:719.69px;font-size:17.2px;line-height:17.2px;color:#000;font-weight:normal;font-family:'Liberation Sans', sans-serif;-webkit-text-stroke:0.25px currentColor;letter-spacing:0.2px">64944602</div>
<div class="t" style="left:-208.25px;width:800px;text-align:center;top:719.69px;font-size:17.2px;line-height:17.2px;color:#000;font-weight:normal;font-family:'Liberation Sans', sans-serif;-webkit-text-stroke:0.25px currentColor;">Deposit</div>
<div class="t" style="right:810px;top:719.69px;font-size:17.2px;line-height:17.2px;color:#000;font-weight:normal;font-family:'Liberation Sans', sans-serif;-webkit-text-stroke:0.25px currentColor;letter-spacing:0.33px">27/10/2025 22:28</div>
<div class="t" style="left:29.0px;width:800px;text-align:center;top:719.69px;font-size:17.2px;line-height:17.2px;color:#000;font-weight:normal;font-family:'Liberation Sans', sans-serif;-webkit-text-stroke:0.25px currentColor;">583,57</div>
<div class="t" style="left:487.5px;top:719.69px;font-size:17.2px;line-height:17.2px;color:#000;font-weight:normal;font-family:'Liberation Sans', sans-serif;-webkit-text-stroke:0.25px currentColor;">Du 16 octobre 2024 au 16 novembre 2025 - Page 3/4</div>
<div class="t" style="left:928.5px;top:719.69px;font-size:17.2px;line-height:17.2px;color:#000;font-weight:normal;font-family:'Liberation Sans', sans-serif;-webkit-text-stroke:0.25px currentColor;letter-spacing:-0.15px">31.10 Du 281025</div>
<div class="t" style="left:1080.5px;top:719.69px;font-size:17.2px;line-height:17.2px;color:#000;font-weight:normal;font-family:'Liberation Sans', sans-serif;-webkit-text-stroke:0.25px currentColor;letter-spacing:-1.2px">CB</div>
<div class="t" style="left:-384px;width:800px;text-align:center;top:745.04px;font-size:17.2px;line-height:17.2px;color:#262626;font-weight:normal;font-family:'Liberation Sans', sans-serif;-webkit-text-stroke:0.25px currentColor;">55</div>
<div class="t" style="left:-305.75px;width:800px;text-align:center;top:745.04px;font-size:17.2px;line-height:17.2px;color:#000;font-weight:normal;font-family:'Liberation Sans', sans-serif;-webkit-text-stroke:0.25px currentColor;letter-spacing:0.2px">65015319</div>
<div class="t" style="left:-208.25px;width:800px;text-align:center;top:745.04px;font-size:17.2px;line-height:17.2px;color:#000;font-weight:normal;font-family:'Liberation Sans', sans-serif;-webkit-text-stroke:0.25px currentColor;">Deposit</div>
<div class="t" style="right:810px;top:745.04px;font-size:17.2px;line-height:17.2px;color:#000;font-weight:normal;font-family:'Liberation Sans', sans-serif;-webkit-text-stroke:0.25px currentColor;letter-spacing:0.33px">11/11/2025 16:53</div>
<div class="t" style="left:29.0px;width:800px;text-align:center;top:745.04px;font-size:17.2px;line-height:17.2px;color:#000;font-weight:normal;font-family:'Liberation Sans', sans-serif;-webkit-text-stroke:0.25px currentColor;">371,04</div>
<div class="t" style="left:487.5px;top:745.04px;font-size:17.2px;line-height:17.2px;color:#000;font-weight:normal;font-family:'Liberation Sans', sans-serif;-webkit-text-stroke:0.25px currentColor;">Du 06 novembre 2025 au 11 décembre 2025 - Page 2/4</div>
<div class="t" style="left:928.5px;top:745.04px;font-size:17.2px;line-height:17.2px;color:#000;font-weight:normal;font-family:'Liberation Sans', sans-serif;-webkit-text-stroke:0.25px currentColor;letter-spacing:-0.15px">28.11 Du 111125</div>
<div class="t" style="left:1080.5px;top:745.04px;font-size:17.2px;line-height:17.2px;color:#000;font-weight:normal;font-family:'Liberation Sans', sans-serif;-webkit-text-stroke:0.25px currentColor;letter-spacing:-1.2px">CB</div>
<div class="t" style="left:-384px;width:800px;text-align:center;top:770.39px;font-size:17.2px;line-height:17.2px;color:#262626;font-weight:normal;font-family:'Liberation Sans', sans-serif;-webkit-text-stroke:0.25px currentColor;">56</div>
<div class="t" style="left:-305.75px;width:800px;text-align:center;top:770.39px;font-size:17.2px;line-height:17.2px;color:#000;font-weight:normal;font-family:'Liberation Sans', sans-serif;-webkit-text-stroke:0.25px currentColor;letter-spacing:0.2px">65027096</div>
<div class="t" style="left:-208.25px;width:800px;text-align:center;top:770.39px;font-size:17.2px;line-height:17.2px;color:#000;font-weight:normal;font-family:'Liberation Sans', sans-serif;-webkit-text-stroke:0.25px currentColor;">Deposit</div>
<div class="t" style="right:810px;top:770.39px;font-size:17.2px;line-height:17.2px;color:#000;font-weight:normal;font-family:'Liberation Sans', sans-serif;-webkit-text-stroke:0.25px currentColor;letter-spacing:0.33px">13/11/2025 15:48</div>
<div class="t" style="left:29.0px;width:800px;text-align:center;top:770.39px;font-size:17.2px;line-height:17.2px;color:#000;font-weight:normal;font-family:'Liberation Sans', sans-serif;-webkit-text-stroke:0.25px currentColor;">466,66</div>
<div class="t" style="left:487.5px;top:770.39px;font-size:17.2px;line-height:17.2px;color:#000;font-weight:normal;font-family:'Liberation Sans', sans-serif;-webkit-text-stroke:0.25px currentColor;">Du 06 novembre 2025 au 11 décembre 2025 - Page 2/4</div>
<div class="t" style="left:928.5px;top:770.39px;font-size:17.2px;line-height:17.2px;color:#000;font-weight:normal;font-family:'Liberation Sans', sans-serif;-webkit-text-stroke:0.25px currentColor;letter-spacing:-0.15px">28.11 Du 131125</div>
<div class="t" style="left:1080.5px;top:770.39px;font-size:17.2px;line-height:17.2px;color:#000;font-weight:normal;font-family:'Liberation Sans', sans-serif;-webkit-text-stroke:0.25px currentColor;letter-spacing:-1.2px">CB</div>
<div class="t" style="left:-384px;width:800px;text-align:center;top:795.74px;font-size:17.2px;line-height:17.2px;color:#262626;font-weight:normal;font-family:'Liberation Sans', sans-serif;-webkit-text-stroke:0.25px currentColor;">57</div>
<div class="t" style="left:-305.75px;width:800px;text-align:center;top:795.74px;font-size:17.2px;line-height:17.2px;color:#000;font-weight:normal;font-family:'Liberation Sans', sans-serif;-webkit-text-stroke:0.25px currentColor;letter-spacing:0.2px">65069963</div>
<div class="t" style="left:-208.25px;width:800px;text-align:center;top:795.74px;font-size:17.2px;line-height:17.2px;color:#000;font-weight:normal;font-family:'Liberation Sans', sans-serif;-webkit-text-stroke:0.25px currentColor;">Deposit</div>
<div class="t" style="right:810px;top:795.74px;font-size:17.2px;line-height:17.2px;color:#000;font-weight:normal;font-family:'Liberation Sans', sans-serif;-webkit-text-stroke:0.25px currentColor;letter-spacing:0.33px">24/11/2025 10:15</div>
<div class="t" style="left:29.0px;width:800px;text-align:center;top:795.74px;font-size:17.2px;line-height:17.2px;color:#000;font-weight:normal;font-family:'Liberation Sans', sans-serif;-webkit-text-stroke:0.25px currentColor;">461,52</div>
<div class="t" style="left:487.5px;top:795.74px;font-size:17.2px;line-height:17.2px;color:#000;font-weight:normal;font-family:'Liberation Sans', sans-serif;-webkit-text-stroke:0.25px currentColor;">Du 06 novembre 2025 au 11 décembre 2025 - Page 2/4</div>
<div class="t" style="left:928.5px;top:795.74px;font-size:17.2px;line-height:17.2px;color:#000;font-weight:normal;font-family:'Liberation Sans', sans-serif;-webkit-text-stroke:0.25px currentColor;letter-spacing:-0.15px">28.11 Du 241125</div>
<div class="t" style="left:1080.5px;top:795.74px;font-size:17.2px;line-height:17.2px;color:#000;font-weight:normal;font-family:'Liberation Sans', sans-serif;-webkit-text-stroke:0.25px currentColor;letter-spacing:-1.2px">CB</div>
<div class="t" style="left:-384px;width:800px;text-align:center;top:821.09px;font-size:17.2px;line-height:17.2px;color:#262626;font-weight:normal;font-family:'Liberation Sans', sans-serif;-webkit-text-stroke:0.25px currentColor;">58</div>
<div class="t" style="left:-305.75px;width:800px;text-align:center;top:821.09px;font-size:17.2px;line-height:17.2px;color:#000;font-weight:normal;font-family:'Liberation Sans', sans-serif;-webkit-text-stroke:0.25px currentColor;letter-spacing:0.2px">65091311</div>
<div class="t" style="left:-208.25px;width:800px;text-align:center;top:821.09px;font-size:17.2px;line-height:17.2px;color:#000;font-weight:normal;font-family:'Liberation Sans', sans-serif;-webkit-text-stroke:0.25px currentColor;">Deposit</div>
<div class="t" style="right:810px;top:821.09px;font-size:17.2px;line-height:17.2px;color:#000;font-weight:normal;font-family:'Liberation Sans', sans-serif;-webkit-text-stroke:0.25px currentColor;letter-spacing:0.33px">28/11/2025 14:30</div>
<div class="t" style="left:29.0px;width:800px;text-align:center;top:821.09px;font-size:17.2px;line-height:17.2px;color:#000;font-weight:normal;font-family:'Liberation Sans', sans-serif;-webkit-text-stroke:0.25px currentColor;">1 890,26</div>
<div class="t" style="left:304.0px;width:800px;text-align:center;top:821.09px;font-size:17.2px;line-height:17.2px;color:#ff0000;font-weight:normal;font-family:'Liberation Sans', sans-serif;-webkit-text-stroke:0.25px currentColor;letter-spacing:-0.83px">INTROUVABLE SUR LE RELEVE BANCAIRE</div>
<div class="t" style="left:-384px;width:800px;text-align:center;top:846.44px;font-size:17.2px;line-height:17.2px;color:#262626;font-weight:normal;font-family:'Liberation Sans', sans-serif;-webkit-text-stroke:0.25px currentColor;">59</div>
<div class="t" style="left:-384px;width:800px;text-align:center;top:871.79px;font-size:17.2px;line-height:17.2px;color:#262626;font-weight:normal;font-family:'Liberation Sans', sans-serif;-webkit-text-stroke:0.25px currentColor;">60</div>
<div class="t" style="left:-384px;width:800px;text-align:center;top:897.14px;font-size:17.2px;line-height:17.2px;color:#262626;font-weight:normal;font-family:'Liberation Sans', sans-serif;-webkit-text-stroke:0.25px currentColor;">61</div>
<div class="t" style="left:-384px;width:800px;text-align:center;top:922.49px;font-size:17.2px;line-height:17.2px;color:#262626;font-weight:normal;font-family:'Liberation Sans', sans-serif;-webkit-text-stroke:0.25px currentColor;">62</div>
<div class="t" style="left:-384px;width:800px;text-align:center;top:947.84px;font-size:17.2px;line-height:17.2px;color:#262626;font-weight:normal;font-family:'Liberation Sans', sans-serif;-webkit-text-stroke:0.25px currentColor;">63</div>
<div class="t" style="left:-384px;width:800px;text-align:center;top:973.19px;font-size:17.2px;line-height:17.2px;color:#262626;font-weight:normal;font-family:'Liberation Sans', sans-serif;-webkit-text-stroke:0.25px currentColor;">64</div>
<div class="t" style="right:810px;top:896.81px;font-size:17px;line-height:17px;color:#000;font-weight:bold;font-family:'Liberation Sans', sans-serif;-webkit-text-stroke:0.25px currentColor;">Total prélevé</div>
<div class="t" style="left:29.5px;width:800px;text-align:center;top:896.81px;font-size:17px;line-height:17px;color:#ff0000;font-weight:bold;font-family:'Liberation Sans', sans-serif;-webkit-text-stroke:0.25px currentColor;">201 155,41</div>
<div class="t" style="right:810px;top:922.16px;font-size:17px;line-height:17px;color:#000;font-weight:bold;font-family:'Liberation Sans', sans-serif;-webkit-text-stroke:0.25px currentColor;letter-spacing:-0.25px">Total inconnues</div>
<div class="t" style="left:29.5px;width:800px;text-align:center;top:922.16px;font-size:17px;line-height:17px;color:#ff0000;font-weight:bold;font-family:'Liberation Sans', sans-serif;-webkit-text-stroke:0.25px currentColor;">18 971,99</div>
<div class="t" style="right:810.5px;top:945.56px;font-size:19.3px;line-height:19.3px;color:#000;font-weight:bold;font-family:'Liberation Sans', sans-serif;-webkit-text-stroke:0.25px currentColor;">Total</div>
<div class="t" style="left:29px;width:800px;text-align:center;top:945.56px;font-size:19.3px;line-height:19.3px;color:#ff0000;font-weight:bold;font-family:'Liberation Sans', sans-serif;-webkit-text-stroke:0.25px currentColor;letter-spacing:0.3px">220 127,40</div>
<svg width="1181" height="290" style="left:0;top:0"><rect x="26.5" y="10.5" width="16" height="16" fill="none" stroke="#fff" stroke-width="2"/><rect x="27" y="19" width="15" height="7" fill="#fff"/><rect x="30.5" y="21.5" width="3" height="4" fill="#217346"/><rect x="35" y="21.5" width="3" height="4" fill="#217346"/><path d="M63.5 16 H75 A5.5 5.5 0 0 1 75 27" fill="none" stroke="#fff" stroke-width="2.2"/><polyline points="69.5,10.5 63.5,16 69.5,21.5" fill="none" stroke="#fff" stroke-width="2.2"/><polyline points="89.5,16.5 93.5,20.5 97.5,16.5" fill="none" stroke="#fff" stroke-width="1.6"/><path d="M130 16 H118.5 A5.5 5.5 0 0 0 118.5 27" fill="none" stroke="#63a582" stroke-width="2.2"/><polyline points="124,10.5 130,16 124,21.5" fill="none" stroke="#63a582" stroke-width="2.2"/><polyline points="139.5,16.5 143.0,20.5 146.5,16.5" fill="none" stroke="#63a582" stroke-width="1.6"/><rect x="169" y="16" width="7" height="1.6" fill="#fff"/><polygon points="168.8,18.6 176,18.6 172.4,22.6" fill="#fff"/><path d="M951.5 64.5 C951.5 60 948.5 58.5 948.5 55.5 A6.8 6.8 0 0 1 962 55.5 C962 58.5 959 60 959 64.5 Z" fill="none" stroke="#fff" stroke-width="1.6"/><rect x="952" y="64.8" width="6.5" height="3" fill="none" stroke="#fff" stroke-width="1.4"/><rect x="953.3" y="69.3" width="4" height="2" fill="#fff"/><rect x="20.5" y="94.3" width="28.7" height="33" fill="#dcdcdc"/><rect x="24" y="99" width="21.5" height="5" fill="#e6e6e6"/><rect x="25.8" y="95.1" width="17.7" height="3.8" fill="#a9a9a9"/><path d="M31.4 95.2 V90.5 H38.2 V95.2 Z M33.6 93.3 a1.2 1.2 0 1 0 2.4 0 a1.2 1.2 0 1 0 -2.4 0" fill="#a9a9a9" fill-rule="evenodd"/><path d="M38.4 105.6 H49.2 L55.8 112 V128.6 H38.4 Z" fill="#f8f6f8" stroke="#a6a6a6" stroke-width="1.3"/><path d="M49.2 105.6 V112 H55.8" fill="none" stroke="#a6a6a6" stroke-width="1.3"/><polyline points="31.5,162 35.25,166 39,162" fill="none" stroke="#9a9a9a" stroke-width="1.4"/><path d="M70.6 90 L78.6 101.5 M80.2 90 L72.2 101.5" stroke="#4a4a4a" stroke-width="2.3" fill="none"/><circle cx="70.7" cy="105" r="3.1" fill="#fff" stroke="#3c78c0" stroke-width="1.7"/><circle cx="80.3" cy="105" r="3.1" fill="#fff" stroke="#3c78c0" stroke-width="1.7"/><path d="M68.3 120.4 H73.5 L76.6 123.6 V132.7 H68.3 Z" fill="#fff" stroke="#595959" stroke-width="1.3"/><path d="M69.4 124 H71.6 M69.4 126.8 H74.6 M69.4 129.2 H74.6" stroke="#3a78c2" stroke-width="1.2"/><path d="M76.2 126.8 H81 L84.7 130.5 V138.7 H76.2 Z" fill="#fff" stroke="#595959" stroke-width="1.3"/><path d="M77.6 130.2 H79.6 M77.6 133.2 H83 M77.6 135.5 H83" stroke="#3a78c2" stroke-width="1.2"/><polyline points="102,129 105.8,133 109.6,129" fill="none" stroke="#262626" stroke-width="1.5"/><polygon points="66.2,159.9 72,157.3 79,164 74.3,168.8" fill="#e8b14f"/><rect x="-4.5" y="-2.3" width="9" height="4.6" rx="0.8" transform="translate(78.2 158.8) rotate(45)" fill="#4d4d4d"/><rect x="-3" y="-2.3" width="6" height="4.6" rx="0.8" transform="translate(83 154.4) rotate(-45)" fill="#5a5a5a"/><polyline points="116.39999999999999,193.3 116.39999999999999,185.4 124.3,185.4" fill="none" stroke="#262626" stroke-width="1.3"/><line x1="118.8" y1="187.8" x2="125.3" y2="194.3" stroke="#262626" stroke-width="1.3"/><polyline points="120.8, 194.70000000000002 125.7,194.70000000000002 125.7,189.8" fill="none" stroke="#262626" stroke-width="1.3"/><polygon points="276,108 281.5,108 278.75,111" fill="#555"/><polygon points="335.3,108 341.3,108 338.3,111" fill="#555"/><polygon points="367.3,103.4 372.6,103.4 370,100.4" fill="#2f6fba"/><polygon points="396.9,100.4 402.3,100.4 399.6,103.4" fill="#2f6fba"/><polyline points="234.7,149 238.3,153 241.9,149" fill="none" stroke="#262626" stroke-width="1.6"/><line x1="253" y1="136.5" x2="253" y2="165" stroke="#d2d2d2" stroke-width="1"/><rect x="261.5" y="140" width="17.5" height="18" fill="#fff" stroke="#b5b5b5" stroke-width="1" stroke-dasharray="1 1"/><line x1="270.3" y1="140" x2="270.3" y2="158" stroke="#a5a5a5" stroke-width="1"/><line x1="261.5" y1="149" x2="279" y2="149" stroke="#bbbbbb" stroke-width="1" stroke-dasharray="1 1"/><line x1="261" y1="158" x2="279.5" y2="158" stroke="#8a8a8a" stroke-width="1.2"/><polyline points="289.5,149 293.35,153 297.2,149" fill="none" stroke="#262626" stroke-width="1.6"/><line x1="308" y1="136.5" x2="308" y2="165" stroke="#d2d2d2" stroke-width="1"/><polygon points="318.8,149.2 324.5,142.8 331,148.9 325.4,154.5" fill="#fff" stroke="#6b6b6b" stroke-width="1.5" stroke-linejoin="round"/><circle cx="325.1" cy="141.3" r="2" fill="none" stroke="#6b6b6b" stroke-width="1.4"/><line x1="326.4" y1="143" x2="326.4" y2="145.8" stroke="#6b6b6b" stroke-width="1.4"/><path d="M329.2 144.2 Q334.6 146.4 332.4 154 Q331.6 149.6 329.8 148.6 Z" fill="#2e6cc0"/><rect x="316.4" y="156" width="19" height="4" fill="#e8e8e8"/><polyline points="345,149 348.75,153 352.5,149" fill="none" stroke="#262626" stroke-width="1.6"/><rect x="364" y="155.3" width="21" height="5" fill="#ff0000"/><polyline points="393.8,149 397.55,153 401.3,149" fill="none" stroke="#262626" stroke-width="1.6"/><polyline points="403.90000000000003,193.5 403.90000000000003,185.6 411.8,185.6" fill="none" stroke="#262626" stroke-width="1.3"/><line x1="406.3" y1="188" x2="412.8" y2="194.5" stroke="#262626" stroke-width="1.3"/><polyline points="408.3, 194.9 413.2,194.9 413.2,190" fill="none" stroke="#262626" stroke-width="1.3"/><line x1="434.1" y1="100.3" x2="451.5" y2="100.3" stroke="#7a7a7a" stroke-width="1.4"/><line x1="436.536" y1="103.8" x2="449.064" y2="103.8" stroke="#7a7a7a" stroke-width="1.4"/><line x1="434.1" y1="107.5" x2="451.5" y2="107.5" stroke="#7a7a7a" stroke-width="1.4"/><line x1="463.5" y1="105.6" x2="481.2" y2="105.6" stroke="#7a7a7a" stroke-width="1.4"/><line x1="465.978" y1="109.1" x2="478.72200000000004" y2="109.1" stroke="#7a7a7a" stroke-width="1.4"/><line x1="463.5" y1="112.6" x2="481.2" y2="112.6" stroke="#7a7a7a" stroke-width="1.4"/><rect x="488.6" y="96.3" width="27.4" height="28.4" fill="#c6c6c6" stroke="#9e9e9e" stroke-width="1"/><line x1="493.5" y1="110.9" x2="510.7" y2="110.9" stroke="#6b6b6b" stroke-width="1.4"/><line x1="495.908" y1="114.3" x2="508.29200000000003" y2="114.3" stroke="#6b6b6b" stroke-width="1.4"/><line x1="493.5" y1="117.9" x2="510.7" y2="117.9" stroke="#6b6b6b" stroke-width="1.4"/><line x1="519.5" y1="96" x2="519.5" y2="125" stroke="#dcdcdc" stroke-width="1"/><text x="0" y="0" transform="translate(533.6 116) rotate(-45)" font-family="Liberation Sans" font-size="12.5" fill="#4a4a4a">ab</text><line x1="537" y1="117.2" x2="546" y2="108.5" stroke="#4a4a4a" stroke-width="1.3"/><polygon points="546.6,107.8 542.6,108.6 545.8,111.8" fill="#4a4a4a"/><polyline points="553.7,109 557.3,112.6 560.9,109" fill="none" stroke="#262626" stroke-width="1.6"/><line x1="433.8" y1="140.3" x2="451.3" y2="140.3" stroke="#7a7a7a" stroke-width="1.4"/><line x1="433.8" y1="143.9" x2="446.40000000000003" y2="143.9" stroke="#7a7a7a" stroke-width="1.4"/><line x1="433.8" y1="147.6" x2="451.3" y2="147.6" stroke="#7a7a7a" stroke-width="1.4"/><line x1="433.8" y1="151" x2="446.40000000000003" y2="151" stroke="#7a7a7a" stroke-width="1.4"/><line x1="433.8" y1="154.4" x2="451.3" y2="154.4" stroke="#7a7a7a" stroke-width="1.4"/><line x1="433.8" y1="158.1" x2="446.40000000000003" y2="158.1" stroke="#7a7a7a" stroke-width="1.4"/><line x1="463.5" y1="140.3" x2="481.2" y2="140.3" stroke="#7a7a7a" stroke-width="1.4"/><line x1="465.978" y1="143.9" x2="478.72200000000004" y2="143.9" stroke="#7a7a7a" stroke-width="1.4"/><line x1="463.5" y1="147.6" x2="481.2" y2="147.6" stroke="#7a7a7a" stroke-width="1.4"/><line x1="465.978" y1="151" x2="478.72200000000004" y2="151" stroke="#7a7a7a" stroke-width="1.4"/><line x1="463.5" y1="154.4" x2="481.2" y2="154.4" stroke="#7a7a7a" stroke-width="1.4"/><line x1="465.978" y1="158.1" x2="478.72200000000004" y2="158.1" stroke="#7a7a7a" stroke-width="1.4"/><line x1="493.1" y1="140.3" x2="511.2" y2="140.3" stroke="#7a7a7a" stroke-width="1.4"/><line x1="498.168" y1="143.9" x2="511.2" y2="143.9" stroke="#7a7a7a" stroke-width="1.4"/><line x1="493.1" y1="147.6" x2="511.2" y2="147.6" stroke="#7a7a7a" stroke-width="1.4"/><line x1="498.168" y1="151" x2="511.2" y2="151" stroke="#7a7a7a" stroke-width="1.4"/><line x1="493.1" y1="154.4" x2="511.2" y2="154.4" stroke="#7a7a7a" stroke-width="1.4"/><line x1="498.168" y1="158.1" x2="511.2" y2="158.1" stroke="#7a7a7a" stroke-width="1.4"/><line x1="520.5" y1="136.6" x2="520.5" y2="164.5" stroke="#d2d2d2" stroke-width="1"/><line x1="528.1" y1="140.3" x2="547.8" y2="140.3" stroke="#7a7a7a" stroke-width="1.4"/><line x1="528.1" y1="158.1" x2="547.8" y2="158.1" stroke="#7a7a7a" stroke-width="1.4"/><line x1="539.7" y1="143.9" x2="547.8" y2="143.9" stroke="#7a7a7a" stroke-width="1.4"/><line x1="539.7" y1="147.6" x2="547.8" y2="147.6" stroke="#7a7a7a" stroke-width="1.4"/><line x1="539.7" y1="151" x2="547.8" y2="151" stroke="#7a7a7a" stroke-width="1.4"/><line x1="539.7" y1="154.4" x2="547.8" y2="154.4" stroke="#7a7a7a" stroke-width="1.4"/><path d="M536.1 149.6 H529.6 M532.7 146.4 L529.3000000000001 149.6 L532.7 152.8" fill="none" stroke="#2f6fba" stroke-width="2.2"/><line x1="557.8" y1="140.3" x2="577.4" y2="140.3" stroke="#7a7a7a" stroke-width="1.4"/><line x1="557.8" y1="158.1" x2="577.4" y2="158.1" stroke="#7a7a7a" stroke-width="1.4"/><line x1="569.4" y1="143.9" x2="577.4" y2="143.9" stroke="#7a7a7a" stroke-width="1.4"/><line x1="569.4" y1="147.6" x2="577.4" y2="147.6" stroke="#7a7a7a" stroke-width="1.4"/><line x1="569.4" y1="151" x2="577.4" y2="151" stroke="#7a7a7a" stroke-width="1.4"/><line x1="569.4" y1="154.4" x2="577.4" y2="154.4" stroke="#7a7a7a" stroke-width="1.4"/><path d="M557.8 149.6 H564.4 M561.4 146.4 L564.8 149.6 L561.4 152.8" fill="none" stroke="#2f6fba" stroke-width="2.2"/><line x1="587.5" y1="93" x2="587.5" y2="167" stroke="#d6d6d6" stroke-width="1"/><text x="600.2" y="109.3" font-family="Liberation Sans" font-size="12.8" fill="#404040" letter-spacing="-0.3">ab</text><text x="600" y="118.4" font-family="Liberation Sans" font-size="12.8" fill="#404040">c</text><path d="M613.8 112.6 Q613.8 116.2 610 116.2" fill="none" stroke="#2f6fba" stroke-width="1.4"/><polyline points="611.4,114.2 609,116.2 611.4,118.2" fill="none" stroke="#2f6fba" stroke-width="1.4"/><rect x="597" y="139.6" width="19.2" height="19.2" fill="#fff" stroke="#5a5a5a" stroke-width="1.2"/><line x1="597" y1="143.6" x2="616.2" y2="143.6" stroke="#5a5a5a" stroke-width="1.1"/><line x1="597" y1="155" x2="616.2" y2="155" stroke="#5a5a5a" stroke-width="1.1"/><line x1="606.6" y1="139.6" x2="606.6" y2="143.6" stroke="#5a5a5a" stroke-width="1.1"/><line x1="606.6" y1="155" x2="606.6" y2="158.8" stroke="#5a5a5a" stroke-width="1.1"/><path d="M600 149.3 H613.4 M602.4 147.3 L600 149.3 L602.4 151.3 M611 147.3 L613.4 149.3 L611 151.3" fill="none" stroke="#2f6fba" stroke-width="1.3"/><polyline points="778,149.5 781.75,153.5 785.5,149.5" fill="none" stroke="#262626" stroke-width="1.6"/><polyline points="883.6,193.7 883.6,185.79999999999998 891.5,185.79999999999998" fill="none" stroke="#262626" stroke-width="1.3"/><line x1="886" y1="188.2" x2="892.5" y2="194.7" stroke="#262626" stroke-width="1.3"/><polyline points="888, 195.1 892.9,195.1 892.9,190.2" fill="none" stroke="#262626" stroke-width="1.3"/><polygon points="1068,108.5 1074,108.5 1071.0,111.5" fill="#555"/><rect x="913" y="141.4" width="18.6" height="8.2" fill="#fff" stroke="#2f6db8" stroke-width="2"/><circle cx="921.5" cy="145.2" r="2.5" fill="#2f6db8"/><rect x="923.8" y="146.2" width="10" height="9.6" fill="#f3f3f3"/><rect x="918.2" y="152.6" width="9.2" height="7.6" fill="#f3f3f3"/><rect x="925.2" y="147.0" width="7.8" height="2.2" fill="#eab36a"/><rect x="925.2" y="149.7" width="7.8" height="2.2" fill="#eab36a"/><rect x="925.2" y="152.4" width="7.8" height="2.2" fill="#eab36a"/><rect x="919" y="154.4" width="7.8" height="2.2" fill="#eab36a"/><rect x="919" y="157.2" width="7.8" height="2.2" fill="#eab36a"/><polyline points="941.5,149 945.5,153 949.5,149" fill="none" stroke="#262626" stroke-width="1.6"/><text x="962" y="157.9" font-family="Liberation Sans" font-size="21.5" fill="#505050">%</text><text x="992.2" y="154.5" font-family="Liberation Sans" font-size="12.6" fill="#555" letter-spacing="-0.8">000</text><line x1="1019.5" y1="138" x2="1019.5" y2="164.5" stroke="#d2d2d2" stroke-width="1"/><path d="M1035 144.6 H1028.2 M1030.9 141.9 L1028.2 144.6 L1030.9 147.3" fill="none" stroke="#2f6fba" stroke-width="1.6"/><text x="1048" y="147.6" text-anchor="end" font-family="Liberation Sans" font-size="12.4" fill="#505050">,0</text><text x="1048" y="158.8" text-anchor="end" font-family="Liberation Sans" font-size="12.4" fill="#505050">,00</text><text x="1077" y="147.6" text-anchor="end" font-family="Liberation Sans" font-size="12.4" fill="#505050">,00</text><path d="M1057.2 155.2 H1064.4 M1061.6 152.4 L1064.4 155.2 L1061.6 158" fill="none" stroke="#2f6fba" stroke-width="1.6"/><text x="1077" y="158.8" text-anchor="end" font-family="Liberation Sans" font-size="12.4" fill="#505050">,0</text><polyline points="1076.6,194.1 1076.6,186.2 1084.5,186.2" fill="none" stroke="#262626" stroke-width="1.3"/><line x1="1079" y1="188.6" x2="1085.5" y2="195.1" stroke="#262626" stroke-width="1.3"/><polyline points="1081, 195.5 1085.9,195.5 1085.9,190.6" fill="none" stroke="#262626" stroke-width="1.3"/><rect x="1144.4" y="91.3" width="33.5" height="27.4" fill="#fff" stroke="#6a6a6a" stroke-width="1.1"/><rect x="1155" y="91.8" width="7.2" height="6" fill="#e8532f"/><rect x="1155" y="98.5" width="11.3" height="6" fill="#2f77c6"/><rect x="1155" y="105.5" width="8.5" height="6" fill="#e8532f"/><rect x="1155" y="112.5" width="4.2" height="6" fill="#2f77c6"/><line x1="1144.4" y1="97.8" x2="1177.9" y2="97.8" stroke="#6a6a6a" stroke-width="1"/><line x1="1144.4" y1="104.9" x2="1177.9" y2="104.9" stroke="#6a6a6a" stroke-width="1"/><line x1="1144.4" y1="111.9" x2="1177.9" y2="111.9" stroke="#6a6a6a" stroke-width="1"/><line x1="1154.7" y1="91.3" x2="1154.7" y2="118.7" stroke="#6a6a6a" stroke-width="1"/><line x1="1168" y1="91.3" x2="1168" y2="118.7" stroke="#6a6a6a" stroke-width="1"/><rect x="1164.5" y="114.5" width="20" height="14" fill="#fff" stroke="#6a6a6a" stroke-width="1.3"/><path d="M1169.5 119.6 H1177.5 M1169.5 123.2 H1177.5 M1175.6 116.6 L1171.2 126.2" fill="none" stroke="#333" stroke-width="1.1"/><polygon points="121.1,227.6 127.6,227.6 124.35,230.5" fill="#666"/><circle cx="155.8" cy="222.9" r="1.1" fill="#8a8a8a"/><circle cx="155.8" cy="228.6" r="1.1" fill="#8a8a8a"/><circle cx="155.8" cy="234.4" r="1.1" fill="#8a8a8a"/><path d="M194 224 L207.5 236.4 M207.5 224 L194 236.4" stroke="#a4a4a4" stroke-width="2" fill="none"/><polyline points="240,229.6 245.6,235.6 256.8,223.8" fill="none" stroke="#bababa" stroke-width="2.8"/><text x="287.5" y="235.6" font-family="Liberation Serif" font-style="italic" font-weight="bold" font-size="20" fill="#505050">f</text><text x="294.8" y="236.2" font-family="Liberation Serif" font-style="italic" font-weight="bold" font-size="14.5" fill="#505050">x</text><polygon points="28.5,262 28.5,279 12,279" fill="#b4b4b4"/></svg>
<div class="t" style="left:149.7px;top:139.74px;font-size:18.5px;line-height:18.5px;color:#444;font-weight:bold;font-family:'Liberation Sans', sans-serif;">G</div>
<div class="t" style="left:180.5px;top:140.24px;font-size:18.5px;line-height:18.5px;color:#444;font-weight:bold;font-family:'Liberation Serif', serif;font-style:italic">I</div>
<div class="t" style="left:209.6px;top:140.16px;font-size:18px;line-height:18px;color:#444;font-weight:bold;font-family:'Liberation Sans', sans-serif;">S</div>
<div class="r" style="left:210px;top:157.4px;width:10px;height:1.3px;background:#555;"></div>
<div class="t" style="left:355.4px;top:100.24px;font-size:19.8px;line-height:19.8px;color:#444;font-weight:normal;font-family:'Liberation Sans', sans-serif;">A</div>
<div class="t" style="left:385.7px;top:103.46px;font-size:16px;line-height:16px;color:#444;font-weight:normal;font-family:'Liberation Sans', sans-serif;">A</div>
<div class="t" style="left:367px;top:139.12px;font-size:19px;line-height:19px;color:#444;font-weight:normal;font-family:'Liberation Sans', sans-serif;">A</div>
</body></html>
